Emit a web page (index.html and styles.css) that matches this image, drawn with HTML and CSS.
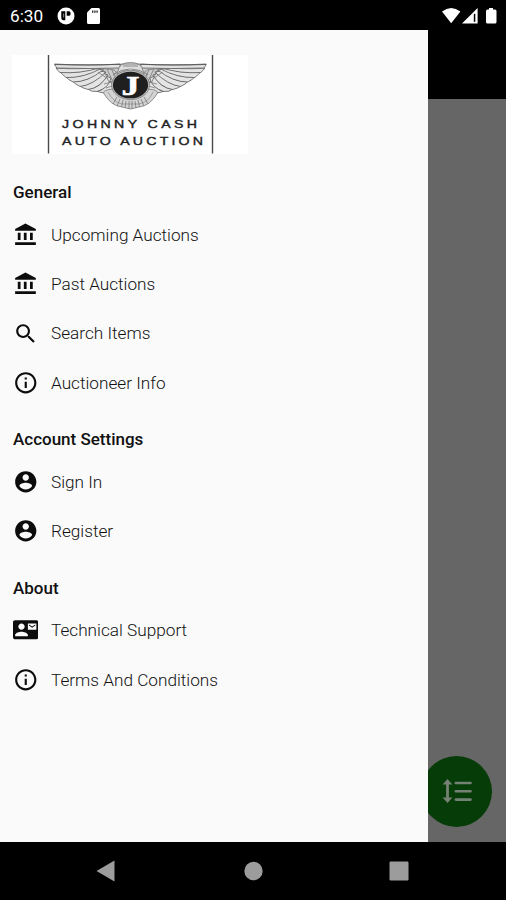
FILE: index.html
```html
<!DOCTYPE html>
<html lang="en">
<head>
  <meta charset="UTF-8">
  <meta name="viewport" content="width=device-width, initial-scale=1">
  <title>Johnny Cash Auto Auction</title>
  <link rel="stylesheet" href="styles.css">
</head>
<body>

<!-- icons used more than once -->
<svg class="defs" width="0" height="0">
  <symbol id="bank" viewBox="0 0 24 24"><path d="M4.500 10v7h2.600v-7H4.500zm5.700 0v7h2.600v-7h-2.600zM2 21.700h19.500v-2.600H2v2.600zm14-11.700v7h2.600v-7h-2.600zM11.700 1.500L2 6.500v1.700h19.500V6.500l-9.800-5z"/></symbol>
  <symbol id="info" viewBox="0 0 24 24"><path d="M11 17h2v-6h-2v6zm1-15C6.480 2 2 6.480 2 12s4.480 10 10 10 10-4.480 10-10S17.520 2 12 2zm0 18c-4.410 0-8-3.590-8-8s3.590-8 8-8 8 3.590 8 8-3.590 8-8 8zM11 9h2V7h-2v2z"/></symbol>
  <symbol id="account" viewBox="0 0 24 24"><path d="M12 2C6.480 2 2 6.480 2 12s4.480 10 10 10 10-4.480 10-10S17.520 2 12 2zm0 3c1.660 0 3 1.340 3 3s-1.340 3-3 3-3-1.340-3-3 1.340-3 3-3zm0 14.200c-2.500 0-4.710-1.280-6-3.220.03-1.990 4-3.080 6-3.080 1.990 0 5.970 1.090 6 3.080-1.290 1.940-3.500 3.220-6 3.220z"/></symbol>
</svg>

<div class="phone">
  <header class="status-bar">
    <span class="time">6:30</span>
    <svg class="app-dot" width="18" height="18" viewBox="0 0 18 18">
      <circle cx="9" cy="9" r="8.500" fill="#fff"/>
      <path d="M4.300 4.200h4v9H6.600A2.300 2.300 0 0 1 4.300 10.900zM9.700 4.200h2.300a1.500 1.500 0 0 1 1.500 1.500v1.500a1.500 1.500 0 0 1-1.500 1.500H9.700z" fill="#000"/>
      <path d="M6 6.500h1.200v4H6z" fill="#777"/>
    </svg>
    <svg class="sd-card" width="13" height="16" viewBox="0 0 13 16">
      <path d="M4.500 0H11.500Q13 0 13 1.500V14.500Q13 16 11.500 16H1.500Q0 16 0 14.500V4.500z" fill="#fff"/>
      <path d="M5 2.400h1.400v2.400H5zM7.200 2.400h1.400v2.400H7.200zM9.400 2.400h1.400v2.400H9.400z" fill="#333"/>
    </svg>
    <svg class="signals" width="56" height="18" viewBox="0 0 56 18" fill="#fff">
      <path d="M0 4.500Q9.200-2.500 18.400 4.500L9.200 16.200z"/>
      <path d="M35.600 1v15.500H20z"/>
      <path d="M31.800 6.800h1.500v8h-1.500z" fill="#000"/>
      <path d="M47 1h4v1.600h2q1.500 0 1.500 1.500V15q0 1.500-1.500 1.500h-7.500Q44 16.500 44 15V4.100q0-1.500 1.500-1.500H47z"/>
    </svg>
  </header>

  <div class="screen">
    <nav class="drawer">
      <svg class="logo" width="236" height="99" viewBox="12 55 236 99">
        <rect x="12" y="55" width="236" height="99" fill="#fff"/>
        <path d="M48.500 55V153.500M212.500 55V153.500" stroke="#4a4a4a" stroke-width="1.400"/>
        <g id="wing">
          <path d="M55 65C75 64 100 65 120 64L128 67V88L112 92Q98 93 88 89Q72 83 65 76Q60 71 55 65z" fill="#ccc"/>
          <g fill="#e4e4e4" stroke="#5a5a5a" stroke-width=".8">
            <path d="M111 82Q117 90 110 92Q102 94 97 91Q105 91 108 80z"/>
            <path d="M111 78Q109 88 97 91.500Q91 92 88 89Q101 88 106 76z"/>
            <path d="M108 75Q100 88 88 89.500Q82 88 80 86Q93 85 102 73z"/>
            <path d="M106 72Q93 85 80 86.500Q75 84 73 81.500Q88 82 99 71z"/>
            <path d="M103 70Q88 82 73 82Q68 79.500 66 77Q83 78 97 69z"/>
            <path d="M101 68.500Q84 78 66 77.500Q62 74 60 72Q80 74 96 67.500z"/>
            <path d="M101 67.500Q80 74 60 72.500Q57 70 56 68Q78 70 104 66.500z"/>
            <path d="M54.500 64Q90 66 120 64V68Q90 69 57 68Q55 66 54.500 64z"/>
          </g>
          <path d="M96 69Q106 68 114 70L121 77M103 69L109 82M107 69L113 82M112 70L117 82M98 72L108 79M104 84L119 80M106 88L118 84" fill="none" stroke="#777" stroke-width=".8"/>
          <path d="M55 64.500Q85 65.500 121 64.300" fill="none" stroke="#555" stroke-width=".9"/>
        </g>
        <use href="#wing" transform="matrix(-1 0 0 1 260.800 0)"/>
        <path d="M113 89Q103 90 103.500 93Q111 106 122 107L130.500 109L139 107Q150 106 157.500 93Q158 90 148 89z" fill="#d4d4d4" stroke="#777" stroke-width=".8"/>
        <path d="M108 92Q113 102 122 104H139Q149 102 153 92" fill="none" stroke="#888" stroke-width=".7"/>
        <path d="M117 97L113 104M120 99L117 106M123 100L121.500 107M126 101L125 108M129 101V109M132 101V109M135 101L136 108M138 100L139.500 107M141 99L144 106M144 97L148 104" stroke="#777" stroke-width=".8"/>
        <path d="M118 71Q119 62.500 130.500 62.500Q142 62.500 143 71L148 75Q140 69 130.500 69Q121 69 113 75z" fill="#ddd" stroke="#777" stroke-width=".8"/>
        <path d="M121 64H140M123 66H138" stroke="#777" stroke-width=".8"/>
        <ellipse cx="130.500" cy="85" rx="19" ry="14.700" fill="#bbb" stroke="#777" stroke-width=".7"/>
        <ellipse cx="130.500" cy="85" rx="17.600" ry="13.300" fill="#1f1f1f"/>
        <text class="logo-letter" x="121.500" y="94.500" textLength="18" lengthAdjust="spacingAndGlyphs">J</text>
        <text class="logo-text" x="51.700" y="128.500" textLength="112.500" transform="scale(1.200 1)">JOHNNY CASH</text>
        <text class="logo-text" x="51.700" y="144.700" textLength="117.500" transform="scale(1.200 1)">AUTO AUCTION</text>
      </svg>

      <h2>General</h2>
      <a class="item"><svg><use href="#bank"/></svg><span>Upcoming Auctions</span></a>
      <a class="item"><svg><use href="#bank"/></svg><span>Past Auctions</span></a>
      <a class="item">
        <svg viewBox="0 0 24 24"><path d="M15.500 14h-.79l-.28-.27C15.410 12.590 16 11.110 16 9.500 16 5.910 13.090 3 9.500 3S3 5.910 3 9.500 5.910 16 9.500 16c1.610 0 3.090-.59 4.230-1.570l.27.280v.79l5 4.990L20.490 19l-4.990-5zm-6 0C7.010 14 5 11.990 5 9.500S7.010 5 9.500 5 14 7.010 14 9.500 11.990 14 9.500 14z"/></svg>
        <span>Search Items</span>
      </a>
      <a class="item"><svg><use href="#info"/></svg><span>Auctioneer Info</span></a>

      <h2>Account Settings</h2>
      <a class="item"><svg><use href="#account"/></svg><span>Sign In</span></a>
      <a class="item"><svg><use href="#account"/></svg><span>Register</span></a>

      <h2>About</h2>
      <a class="item">
        <svg viewBox="0 0 24 24"><path d="M22 3H2C.9 3 0 3.900 0 5v14c0 1.100.9 2 2 2h20c1.100 0 1.990-.9 1.990-2L24 5c0-1.100-.9-2-2-2zM8 6c1.660 0 3 1.340 3 3s-1.340 3-3 3-3-1.340-3-3 1.340-3 3-3zm6 12H2v-1c0-2 4-3.100 6-3.100s6 1.100 6 3.100v1zm8-6h-8V6h8v6zm-1-4l-3 2-3-2V7l3 2 3-2v1z"/></svg>
        <span>Technical Support</span>
      </a>
      <a class="item"><svg><use href="#info"/></svg><span>Terms And Conditions</span></a>
    </nav>

    <main class="page">
      <div class="app-bar"></div>
      <button class="fab" aria-label="Line spacing">
        <svg width="30" height="26" viewBox="0 0 30 26">
          <path d="M5.500 4v18" stroke="#748174" stroke-width="2.800"/>
          <path d="M.6 6.600L5.500 1l4.900 5.600zM.6 19.400L5.500 25l4.900-5.600z" fill="#748174"/>
          <path d="M13.800 5h14.700M13.800 13.200h14.700M13.800 21.600h14.700" stroke="#748174" stroke-width="2.600" stroke-linecap="round"/>
        </svg>
      </button>
    </main>
  </div>

  <footer class="nav-bar">
    <svg width="20" height="22" viewBox="0 0 20 22"><path d="M.5 11L18.500.5v21z"/></svg>
    <svg width="20" height="20" viewBox="0 0 20 20"><circle cx="10.500" cy="10" r="9.200"/></svg>
    <svg width="20" height="20" viewBox="0 0 20 20"><rect x=".5" y=".5" width="19" height="19" rx="1.200"/></svg>
  </footer>
</div>

</body>
</html>
```

FILE: styles.css
```css
* {
  box-sizing: border-box;
}

body {
  margin: 0;
  background: #000;
  font-family: Roboto, sans-serif;
}

.defs {
  position: absolute;
}

.phone {
  width: 506px;
  height: 900px;
  display: flex;
  flex-direction: column;
  overflow: hidden;
}

.status-bar {
  height: 29.5px;
  display: flex;
  align-items: center;
  padding: 2px 8px 0 10px;
  background: #000;
  color: #fff;
}

.time {
  width: 47px;
  font-size: 17.2px;
}

.sd-card {
  margin-left: 12px;
}

.signals {
  margin-left: auto;
}

.screen {
  height: 812px;
  display: flex;
}

.drawer {
  width: 428px;
  padding-top: 25.5px;
  background: #fafafa;
}

.logo {
  display: block;
  margin: 0 0 6.4px 12px;
}

.logo-letter {
  font: bold 28px "Liberation Serif", serif;
  fill: #fff;
  stroke: #fff;
  stroke-width: 0.6px;
}

.logo-text {
  font: 11.8px "Liberation Sans", sans-serif;
  fill: #222;
  stroke: #222;
  stroke-width: 0.4px;
}

h2 {
  height: 49.8px;
  margin: 0;
  padding: 21px 13px 0;
  font-size: 17px;
  font-weight: 500;
  line-height: 22px;
  color: #111;
}

.item {
  height: 49.3px;
  display: flex;
  align-items: center;
  gap: 13px;
  padding-left: 12.5px;
  font-size: 17.2px;
  font-weight: 300;
  color: #111;
}

.item svg {
  width: 25.5px;
  height: 25.5px;
  fill: #0c0c0c;
}

.page {
  flex: 1;
  display: flex;
  flex-direction: column;
  justify-content: space-between;
  background: #666;
  overflow: hidden;
}

.app-bar {
  height: 69px;
  background: #000;
}

.fab {
  width: 71px;
  height: 71px;
  margin: 0 0 15px -7px;
  padding: 0;
  display: flex;
  align-items: center;
  justify-content: center;
  border: none;
  border-radius: 50%;
  background: #063c08;
}

.nav-bar {
  flex: 1;
  display: flex;
  align-items: center;
  justify-content: space-between;
  padding: 0 97px 0 96px;
  background: #000;
}

.nav-bar svg {
  fill: #9c9c9c;
}
```
